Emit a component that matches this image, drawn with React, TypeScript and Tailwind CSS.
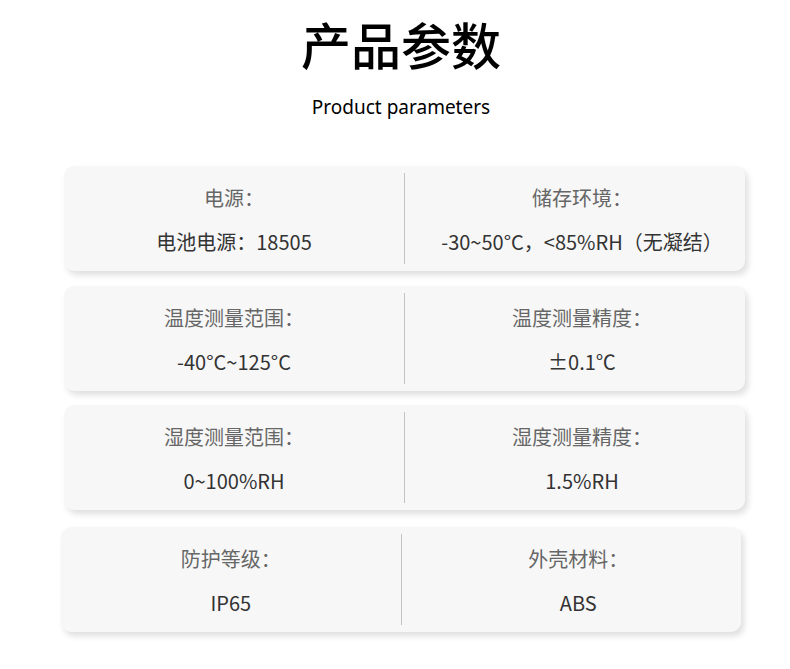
const params = [
  { left: ["电源：", "电池电源：18505"], right: ["储存环境：", "-30~50°C，<85%RH（无凝结）"], box: "ml-[64px] w-[681px] mt-[47px]" },
  { left: ["温度测量范围：", "-40°C~125°C"], right: ["温度测量精度：", "±0.1℃"], box: "ml-[64px] w-[681px] mt-[15px]" },
  { left: ["湿度测量范围：", "0~100%RH"], right: ["湿度测量精度：", "1.5%RH"], box: "ml-[64px] w-[681px] mt-[14px]" },
  { left: ["防护等级：", "IP65"], right: ["外壳材料：", "ABS"], box: "ml-[61px] w-[680px] mt-[17px]" },
];

function Half({ label, value, shift }: { label: string; value: string; shift?: boolean }) {
  return (
    <div className="flex-1 min-w-0 flex justify-center pt-[19px]">
      <div className={"flex flex-col items-center" + (shift ? " ml-[14px]" : "")}>
        <div className="text-[20px] leading-[26px] text-[#666666]">{label}</div>
        <div className="mt-[18px] text-[20px] leading-[26px] text-[#333333]">{value}</div>
      </div>
    </div>
  );
}

export default function App() {
  return (
    <div
      className="w-[790px] h-[669px] bg-white flex flex-col overflow-hidden"
      style={{ fontFamily: '"Noto Sans CJK SC", "Noto Sans", sans-serif' }}
    >
      <h1 className="mt-[17px] pl-[12px] text-center text-[50px] leading-[52px] font-medium text-black">产品参数</h1>
      <p
        className="mt-[26px] pl-[12px] text-center text-[19px] leading-[24px] text-black"
        style={{ fontFamily: '"Noto Sans", sans-serif' }}
      >
        Product parameters
      </p>

      {params.map((row, i) => (
        <div
          key={i}
          className={row.box + " h-[105px] flex rounded-[10px] bg-[#f7f7f7] shadow-[3px_4px_6px_rgba(0,0,0,0.13)]"}
        >
          <Half label={row.left[0]} value={row.left[1]} />
          <div className="w-px my-[7px] bg-[#c4c4c4]" />
          <Half label={row.right[0]} value={row.right[1]} shift />
        </div>
      ))}
    </div>
  );
}
